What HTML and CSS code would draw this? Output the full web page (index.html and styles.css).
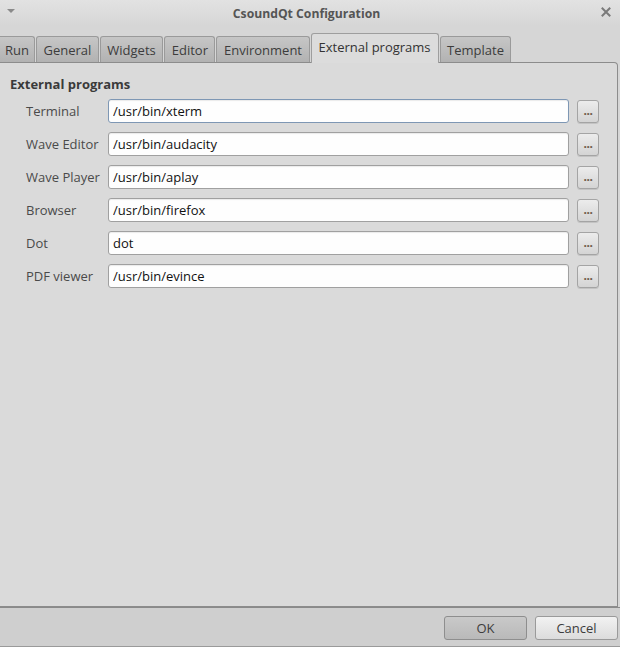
FILE: index.html
```html
<!DOCTYPE html>
<html>
<head>
<meta charset="utf-8">
<link rel="stylesheet" href="styles.css">
</head>
<body>
<div class="window">
  <div class="titlebar">
    <span class="menu-arrow"></span>
    <span class="title">CsoundQt Configuration</span>
    <span class="close">
      <svg width="10" height="10" viewBox="0 0 10 10"><path d="M1.5 1.5 L8.5 8.5 M8.5 1.5 L1.5 8.5" stroke="#7a7a7a" stroke-width="2" stroke-linecap="square"/></svg>
    </span>
  </div>
  <div class="tabs">
    <div class="tab tab-first">Run</div>
    <div class="tab">General</div>
    <div class="tab">Widgets</div>
    <div class="tab">Editor</div>
    <div class="tab">Environment</div>
    <div class="tab tab-active">External programs</div>
    <div class="tab">Template</div>
  </div>
  <div class="pane">
    <div class="section-title">External programs</div>
    <div class="rows">
      <div class="row"><span class="label">Terminal</span><input class="field field-focus" value="/usr/bin/xterm"><button class="browse">...</button></div>
      <div class="row"><span class="label">Wave Editor</span><input class="field" value="/usr/bin/audacity"><button class="browse">...</button></div>
      <div class="row"><span class="label">Wave Player</span><input class="field" value="/usr/bin/aplay"><button class="browse">...</button></div>
      <div class="row"><span class="label">Browser</span><input class="field" value="/usr/bin/firefox"><button class="browse">...</button></div>
      <div class="row"><span class="label">Dot</span><input class="field" value="dot"><button class="browse">...</button></div>
      <div class="row"><span class="label">PDF viewer</span><input class="field" value="/usr/bin/evince"><button class="browse">...</button></div>
    </div>
  </div>
  <div class="footer">
    <button class="btn btn-default">OK</button>
    <button class="btn">Cancel</button>
  </div>
</div>
</body>
</html>
```

FILE: styles.css
```css
* { box-sizing: border-box; }
html, body {
  margin: 0;
  padding: 0;
  width: 620px;
  height: 647px;
  overflow: hidden;
  background: #cfcfcf;
  font-family: "Open Sans", "DejaVu Sans", sans-serif;
  font-size: 13px;
}
.window {
  width: 620px;
  height: 647px;
  display: flex;
  flex-direction: column;
  background: #d6d6d6;
}
.titlebar {
  height: 26px;
  display: flex;
  align-items: center;
  justify-content: center;
  position: relative;
  background: linear-gradient(#e2e2e2, #d6d6d6);
}
.title {
  font-weight: bold;
  color: #555555;
  font-size: 12.2px;
  margin-right: 7px;
}
.menu-arrow {
  position: absolute;
  left: 7px;
  top: 9px;
  width: 0;
  height: 0;
  border-left: 4px solid transparent;
  border-right: 4px solid transparent;
  border-top: 4px solid #8a8a8a;
}
.close {
  position: absolute;
  right: 9px;
  top: 7px;
  display: flex;
}
.tabs {
  height: 36px;
  display: flex;
  align-items: flex-end;
  padding-left: 0;
  gap: 1px;
  background: #d6d6d6;
}
.tab {
  height: 26px;
  padding: 0 6.5px;
  display: flex;
  align-items: center;
  color: #3c3c3c;
  background: linear-gradient(#c6c6c6, #b2b2b2);
  border: 1px solid #9a9a9a;
  border-bottom: none;
  border-radius: 3px 3px 0 0;
  font-size: 13px;
}
.tab-first {
  border-left: none;
  border-radius: 0 3px 0 0;
  padding: 0 5px 0 5px;
}
.tab-active {
  height: 30px;
  background: #dcdcdc;
  color: #333333;
  padding: 0 7px 3px 7px;
  border-color: #9e9e9e;
  position: relative;
  margin-bottom: -1px;
  z-index: 1;
}
.pane {
  height: 545px;
  margin-right: 2px;
  border: 1px solid #8c8c8c;
  border-left: none;
  border-radius: 0 4px 0 0;
  background: #dadada;
  padding: 11px 0 0 10px;
}
.section-title {
  font-weight: bold;
  color: #3a3a3a;
  font-size: 13px;
  height: 20px;
  line-height: 20px;
}
.rows {
  display: flex;
  flex-direction: column;
  gap: 9px;
  margin-top: 5px;
  padding-left: 16px;
}
.row {
  display: flex;
  align-items: center;
  height: 24px;
}
.label {
  width: 82px;
  color: #4a4a4a;
  font-size: 13px;
}
.field {
  width: 461px;
  height: 24px;
  border: 1px solid #a0a0a0;
  border-radius: 3px;
  background: #fefefe;
  font-family: "Open Sans", "DejaVu Sans", sans-serif;
  font-size: 13px;
  color: #111111;
  padding: 0 4px;
  outline: none;
  box-shadow: inset 0 1px 1px rgba(0,0,0,0.08);
}
.field-focus {
  border-color: #7e97b4;
}
.browse {
  margin-left: 8px;
  width: 22px;
  height: 23px;
  border: 1px solid #a4a4a4;
  border-radius: 3px;
  background: linear-gradient(#ececec, #d4d4d4);
  color: #6e5a48;
  font-family: "Open Sans", "DejaVu Sans", sans-serif;
  font-size: 12px;
  font-weight: bold;
  padding: 0 0 1px 0;
  letter-spacing: -0.5px;
  line-height: 1;
  box-shadow: 0 1px 0 rgba(0,0,0,0.1);
}
.footer {
  flex: 1;
  display: flex;
  justify-content: flex-end;
  align-items: center;
  gap: 8px;
  padding: 2px 2px 0 0;
  background: #cfcfcf;
  border-top: 1px solid #8a8a8a;
  border-bottom: 1px solid #9a9a9a;
}
.btn {
  width: 83px;
  height: 24px;
  border: 1px solid #9a9a9a;
  border-radius: 3px;
  background: linear-gradient(#f2f2f2, #dcdcdc);
  font-family: "Open Sans", "DejaVu Sans", sans-serif;
  font-size: 13px;
  color: #3c3c3c;
  padding: 0;
}
.btn-default {
  background: linear-gradient(#c9c9c9, #b9b9b9);
  border-color: #8e8e8e;
}
```
